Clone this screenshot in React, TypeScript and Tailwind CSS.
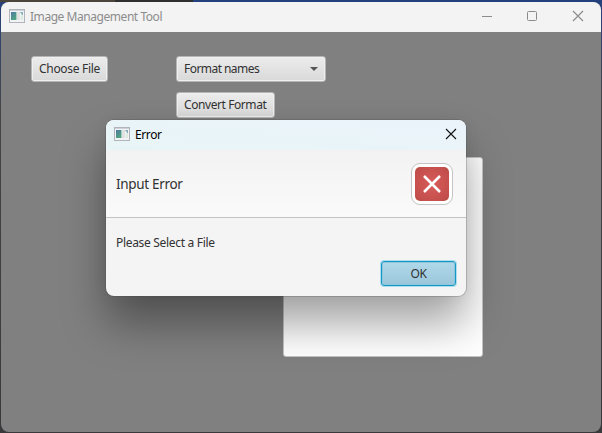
import type { ReactNode } from 'react';

function AppIcon() {
  return (
    <svg width="16" height="14" viewBox="0 0 16 14" className="-mt-[2px] shrink-0">
      <defs>
        <linearGradient id="pane" x1="0" y1="0" x2="0.6" y2="1">
          <stop offset="0" stopColor="#4d78a8" />
          <stop offset="1" stopColor="#4fa37f" />
        </linearGradient>
      </defs>
      <rect x="0.5" y="0.5" width="15" height="13" fill="#f1f3f5" stroke="#b1b5bb" />
      <rect x="1" y="1" width="14" height="1" fill="#ccd0d8" />
      <rect x="2" y="3" width="5" height="8" fill="url(#pane)" />
      <rect x="7" y="3" width="1" height="8" fill="#a9cfc2" />
      <rect x="8" y="3" width="3" height="8" fill="#e0e2e2" />
      <path d="M11 3h3v4z" fill="#86aebd" />
      <rect x="12" y="6" width="2" height="5" fill="#dcebdd" />
    </svg>
  );
}

function Button({ className, children }: { className: string; children: ReactNode }) {
  return (
    <button
      className={`flex h-[26px] items-center rounded-[3px] border border-[#b5b5b5] bg-linear-to-b from-[#ececec] to-[#d9d9d9] pl-[7px] text-left text-[12px] leading-4 whitespace-nowrap text-[#323232] shadow-[inset_0_0_0_1px_#f0f0f0] ${className}`}
    >
      {children}
    </button>
  );
}

function ErrorDialog() {
  return (
    <div className="absolute top-[118px] left-[105px] flex h-[176px] w-[360px] flex-col overflow-hidden rounded-lg bg-[#f4f4f4] shadow-[0_0_0_1px_rgba(70,70,70,0.25),0_28px_44px_rgba(0,0,0,0.36),0_0_16px_rgba(0,0,0,0.06)]">
      <div className="flex h-[30px] shrink-0 items-center bg-linear-to-bl from-[#ebf3fb] to-[#e8f5f6] pr-[9px] pl-2">
        <AppIcon />
        <span className="ml-[5px] text-[12px] leading-4 tracking-[-0.4px] text-black">Error</span>
        <svg width="12" height="12" viewBox="0 0 12 12" className="-mt-[2px] ml-auto" fill="none" stroke="#111" strokeWidth="1.1">
          <path d="M1 1 11 11M11 1 1 11" />
        </svg>
      </div>
      <div className="flex h-[68px] shrink-0 items-center justify-between border-b border-[#c3c3c3] bg-linear-to-b from-[#f2f2f2] to-[#fafafa] pr-[13px] pl-[10px]">
        <span className="text-[13.5px] leading-5 tracking-[-0.32px] text-[#323232]">Input Error</span>
        <div className="flex size-[42px] items-center justify-center rounded-[9px] border border-[#c4c4c4] bg-white">
          <div className="flex size-[34px] items-center justify-center rounded-[5px] bg-radial from-[#d95c5b] to-[#bd4b47]">
            <svg width="34" height="34" viewBox="0 0 34 34" fill="none" stroke="white" strokeWidth="2.5">
              <path d="m9 9 16 16M25 9 9 25" />
            </svg>
          </div>
        </div>
      </div>
      <p className="mt-[17px] ml-[10px] text-[12px] leading-4 tracking-[-0.31px] text-[#323232]">Please Select a File</p>
      <button className="mt-[10px] mr-[10px] flex h-[25px] w-[75px] items-center justify-center self-end rounded-[3px] border border-[#1499c7] bg-linear-to-b from-[#b0d9e9] to-[#9bc6db] text-[12px] leading-4 tracking-[-0.4px] text-[#323232] shadow-[inset_0_0_0_1px_#8fc6db,0_0_0_1px_#acdeef]">
        OK
      </button>
    </div>
  );
}

export default function App() {
  return (
    <div className="h-[433px] w-[602px] overflow-hidden bg-linear-to-b from-[#25417d] via-[#454547] via-25% to-[#39393c] font-['Noto_Sans','Open_Sans',sans-serif]">
      <div className="flex h-[2px]">
        <div className="w-[115px] bg-[#4b463b]" />
        <div className="w-[78px] bg-[#302f30]" />
        <div className="flex-1 bg-[#23407e]" />
      </div>
      <div className="relative ml-px flex h-[430px] w-[600px] flex-col overflow-hidden rounded-lg bg-[#808080]">
        <header className="flex h-[30px] shrink-0 items-center bg-[#f3f3f3] pl-2 text-[#8c8c8c]">
          <AppIcon />
          <span className="ml-[5px] text-[12px] leading-4 tracking-[-0.45px]">Image Management Tool</span>
          <div className="-mt-[2px] mr-[17px] ml-auto flex items-center">
            <svg width="12" height="12" viewBox="0 0 12 12" fill="none" stroke="currentColor">
              <path d="M1 6.5h10" />
            </svg>
            <svg width="12" height="12" viewBox="0 0 12 12" className="ml-[33px]" fill="none" stroke="currentColor">
              <rect x="1.5" y="1.5" width="9" height="9" rx="1" />
            </svg>
            <svg width="12" height="12" viewBox="0 0 12 12" className="ml-[34px]" fill="none" stroke="currentColor" strokeWidth="1.2">
              <path d="m1 1 10 10M11 1 1 11" />
            </svg>
          </div>
        </header>
        <main className="flex flex-1 flex-col pt-[24px] pl-[30px]">
          <div className="flex">
            <Button className="w-[77px] tracking-[-0.3px]">Choose File</Button>
            <Button className="ml-[68px] w-[150px] justify-between pr-[7px] tracking-[-0.55px]">
              <span>Format names</span>
              <svg width="8" height="4" viewBox="0 0 8 4">
                <path d="M0 0h8L4 4z" fill="#555" />
              </svg>
            </Button>
          </div>
          <Button className="mt-[10px] ml-[145px] w-[99px] tracking-[-0.42px]">Convert Format</Button>
          <div className="mt-[39px] ml-[252px] h-[200px] w-[200px] rounded-[3px] border border-[#c5c5c5] bg-white" />
        </main>
        <ErrorDialog />
      </div>
    </div>
  );
}
